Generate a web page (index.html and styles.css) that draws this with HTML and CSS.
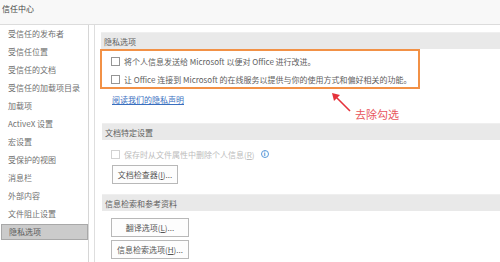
FILE: index.html
```html
<!DOCTYPE html>
<html lang="zh">
<head>
<meta charset="utf-8">
<link rel="stylesheet" href="styles.css">
</head>
<body>
<div class="window">
  <div class="title">信任中心</div>
  <div class="content">
    <ul class="sidebar">
      <li>受信任的发布者</li>
      <li>受信任位置</li>
      <li>受信任的文档</li>
      <li>受信任的加载项目录</li>
      <li>加载项</li>
      <li>ActiveX 设置</li>
      <li>宏设置</li>
      <li>受保护的视图</li>
      <li>消息栏</li>
      <li>外部内容</li>
      <li>文件阻止设置</li>
      <li class="selected">隐私选项</li>
    </ul>
    <div class="main">
      <div class="band band-first">隐私选项</div>
      <div class="highlight">
        <div class="check-row"><span class="box"></span><span>将个人信息发送给 Microsoft 以便对 Office 进行改进。</span></div>
        <div class="check-row"><span class="box"></span><span>让 Office 连接到 Microsoft 的在线服务以提供与你的使用方式和偏好相关的功能。</span></div>
      </div>
      <div class="link-row"><a class="link">阅读我们的隐私声明</a></div>
      <div class="band band-second">文档特定设置</div>
      <div class="check-row disabled"><span class="box"></span><span>保存时从文件属性中删除个人信息(<u>R</u>)</span><span class="info">i</span></div>
      <div class="btn-row"><span class="btn btn-small">文档检查器(<u>I</u>)...</span></div>
      <div class="band band-third">信息检索和参考资料</div>
      <div class="btn-stack">
        <span class="btn btn-wide">翻译选项(<u>L</u>)...</span>
        <span class="btn btn-wide">信息检索选项(<u>H</u>)...</span>
      </div>
      <div class="annotation">
        <svg class="arrow" width="22" height="22" viewBox="0 0 22 22">
          <line x1="19" y1="19" x2="4" y2="4" stroke="#e5323b" stroke-width="1.6"/>
          <polygon points="1,1 9,3 3,9" fill="#e5323b"/>
        </svg>
        <span class="note">去除勾选</span>
      </div>
    </div>
  </div>
</div>
</body>
</html>
```

FILE: styles.css
```css
* { box-sizing: border-box; }
html, body { margin: 0; padding: 0; }
body {
  width: 500px;
  height: 262px;
  overflow: hidden;
  background: #ffffff;
  font-family: "Microsoft YaHei", "Noto Sans CJK SC", "Noto Sans", sans-serif;
  font-size: 8px;
  color: #5a5a5a;
}
.window { display: flex; flex-direction: column; height: 262px; }
.title {
  height: 25px;
  line-height: 17px;
  padding-left: 2px;
  font-size: 8px;
  color: #444;
  background: #f8f8f8;
  border-bottom: 1px solid #dcdcdc;
}
.content { display: flex; flex: 1; gap: 5px; }
.sidebar {
  list-style: none;
  margin: 0;
  padding: 0;
  width: 89px;
  border-right: 1px solid #d6d6d6;
  color: #707070;
}
.sidebar li {
  height: 18px;
  line-height: 18px;
  padding-left: 8px;
  white-space: nowrap;
}
.sidebar li.selected {
  height: 16px;
  line-height: 14px;
  margin: 1px 0 1px 1px;
  padding-left: 7px;
  background: #cbcbcb;
  border: 1px solid #a8a8a8;
  color: #5a5a5a;
}
.main {
  position: relative;
  flex: 1;
  border-left: 1px solid #dedede;
  padding-left: 5px;
}
.band {
  background: #e9e9e9;
  height: 17px;
  line-height: 17px;
  padding-left: 3px;
  color: #606060;
  border-top: 1px solid #efefef;
}
.band-first { margin-top: 7px; margin-left: 1px; }
.band-second { margin-top: 12px; margin-left: 2px; }
.band-third { margin-top: 10px; margin-left: 2px; }
.highlight {
  width: 320px;
  height: 40px;
  border: 2px solid #f29146;
  padding-top: 1px;
  padding-left: 9px;
}
.check-row {
  display: flex;
  align-items: center;
  gap: 4px;
  height: 18px;
  white-space: nowrap;
  color: #606060;
}
.box {
  width: 9px;
  height: 9px;
  border: 1px solid #959595;
  background: #fff;
  flex: none;
}
.disabled { margin-top: 5px; padding-left: 11px; color: #bcbcbc; }
.disabled .box { border-color: #d2d2d2; }
.info {
  width: 8px;
  height: 8px;
  margin-left: 2px;
  border: 1px solid #5a9ad9;
  border-radius: 50%;
  color: #5a9ad9;
  font-size: 6px;
  line-height: 6px;
  text-align: center;
  font-family: "DejaVu Sans", sans-serif;
  font-weight: bold;
}
.link-row { height: 22px; line-height: 22px; padding-left: 12px; }
.link { color: #3a6fbf; text-decoration: underline; }
.btn-row { padding-left: 12px; margin-top: 2px; }
.btn {
  display: flex;
  align-items: center;
  justify-content: center;
  height: 19px;
  border: 1px solid #b8b8b8;
  background: #fdfdfd;
  color: #555;
  white-space: nowrap;
}
.btn-small { width: 66px; }
.btn-stack {
  display: flex;
  flex-direction: column;
  gap: 3px;
  padding-left: 11px;
  margin-top: 7px;
}
.btn-wide { width: 78px; }
.annotation {
  position: absolute;
  left: 236px;
  top: 67px;
  display: flex;
  align-items: flex-end;
}
.arrow { display: block; }
.note {
  font-size: 11px;
  line-height: 12px;
  color: #e8555c;
  margin-left: 2px;
  margin-bottom: -6px;
  white-space: nowrap;
}
```
